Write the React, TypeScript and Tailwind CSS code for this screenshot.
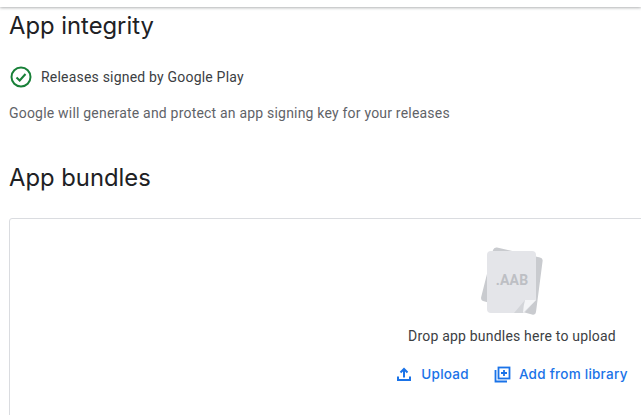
const sans = "font-['Roboto',sans-serif]";

function AabIcon() {
  return (
    <svg width="64" height="74" viewBox="0 0 64 74" className="mb-[7px]">
      <path d="M17 2.500 L60 12.500 Q63 13.200 62.600 16 L56 67 Q55.500 70.500 52 69.500 L3 56 Q0.500 55 1.200 52 L13 5 Q14 2 17 2.500 Z" fill="#c9cbcf" />
      <path d="M11 6 H52 Q56 6 56 10 V55 L44 68 H11 Q7 68 7 64 V10 Q7 6 11 6 Z" fill="#e4e5e9" />
      <path d="M56 55 L43 68 L34 68 L45 55 Z" fill="#d3d5d9" />
      <path d="M56 55 L43 68 Q43.500 60 45 55 Z" fill="#f4f5f7" />
      <text x="32" y="40" textAnchor="middle" fontSize="14" fontWeight="700" fill="#bdbfc4" fontFamily="Roboto, sans-serif">.AAB</text>
    </svg>
  );
}

export default function App() {
  return (
    <div className={`h-[415px] w-[641px] overflow-hidden bg-white tracking-[0.2px] ${sans}`}>
      <div className="h-[7px] bg-white shadow-[0_1px_3px_rgba(60,64,67,0.4)]" />

      {/* App integrity */}
      <section className="px-[9px]">
        <h2 className="mt-[3px] font-['Inter',sans-serif] text-[23.8px] font-[430] leading-[32px] tracking-normal text-[#202124]">App integrity</h2>
        <div className="mt-[24px] flex items-center gap-[9px]">
          <svg width="22" height="22" viewBox="0 0 22 22" fill="none" className="ml-px">
            <circle cx="11" cy="11" r="9.500" stroke="#188038" strokeWidth="2" />
            <path d="M6.500 11.500 L9.700 14.500 L15.500 8" stroke="#188038" strokeWidth="2" />
          </svg>
          <span className="text-sm leading-5 text-[#3c4043]">Releases signed by Google Play</span>
        </div>
        <p className="mt-[15px] text-sm leading-5 text-[#5f6368]">Google will generate and protect an app signing key for your releases</p>

        {/* App bundles */}
        <h2 className="mt-[39px] font-['Inter',sans-serif] text-[23.8px] font-[430] leading-[32px] tracking-normal text-[#202124]">App bundles</h2>
        <div className="mt-[24px] flex h-[300px] w-[1006px] flex-col items-center rounded-[3px] border border-[#dadce0] pt-[26px]">
          <AabIcon />
          <p className="text-sm leading-5 text-[#3c4043]">Drop app bundles here to upload</p>
          <div className="mt-[18px] flex items-center gap-[25px] font-['Inter',sans-serif] text-[13.5px] font-medium leading-5 tracking-[0.25px] text-[#1a73e8]">
            <button className="flex items-center gap-[9px] tracking-[0.25px]">
              <svg width="16" height="16" viewBox="0 0 16 16" fill="none" stroke="currentColor" strokeWidth="2">
                <path d="M2 10.500 V14 H14 V10.500" />
                <path d="M8 11.500 V3.500 M4.500 6.500 L8 3 L11.500 6.500" />
              </svg>
              Upload
            </button>
            <button className="flex items-center gap-[8px] tracking-[0.25px]">
              <svg width="17" height="17" viewBox="0 0 17 17" fill="none" stroke="currentColor" strokeWidth="1.800">
                <path d="M1.500 4 V15.500 H13" />
                <rect x="4.500" y="1.500" width="11" height="11" />
                <path d="M10 4 V10 M7 7 H13" />
              </svg>
              Add from library
            </button>
          </div>
        </div>
      </section>
    </div>
  );
}
